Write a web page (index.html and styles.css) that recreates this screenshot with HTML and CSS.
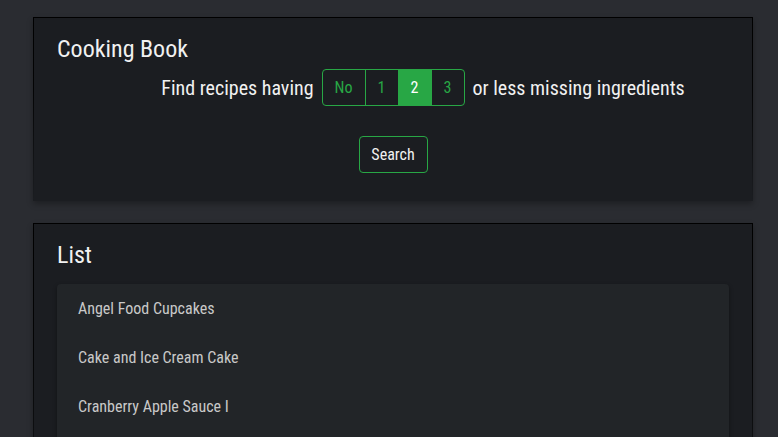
FILE: index.html
```html
<!DOCTYPE html>
<html>
<head>
<meta charset="utf-8">
<link rel="stylesheet" href="styles.css">
</head>
<body>
<div class="page">
  <section class="card">
    <h1 class="title">Cooking Book</h1>
    <div class="filter">
      <span class="label">Find recipes having</span>
      <div class="group">
        <span class="seg seg-no">No</span>
        <span class="seg">1</span>
        <span class="seg active">2</span>
        <span class="seg">3</span>
      </div>
      <span class="label">or less missing ingredients</span>
    </div>
    <div class="actions">
      <button class="search">Search</button>
    </div>
  </section>
  <section class="card list-card">
    <h2 class="title">List</h2>
    <ul class="list">
      <li>Angel Food Cupcakes</li>
      <li>Cake and Ice Cream Cake</li>
      <li>Cranberry Apple Sauce I</li>
    </ul>
  </section>
</div>
</body>
</html>
```
FILE: styles.css
```css
html, body {
  margin: 0;
  padding: 0;
  background: #2a2c31;
  height: 100%;
  overflow: hidden;
}
body {
  font-family: Roboto, "Noto Sans", sans-serif;
  font-stretch: condensed;
  color: #f1f1f1;
}
.page {
  padding: 17px 25px 0 33px;
  display: flex;
  flex-direction: column;
  gap: 22px;
}
.card {
  background: #1b1d21;
  border-style: solid;
  border-width: 1px 1px 0 1px;
  border-image: linear-gradient(to bottom, #000 0%, rgba(0,0,0,0.85) 40%, rgba(0,0,0,0) 100%) 1;
  box-shadow: 0 3px 6px rgba(0,0,0,0.3);
  padding: 17px 23px 28px;
}
.title {
  margin: 0;
  font-size: 24px;
  font-weight: 400;
  line-height: 28px;
}
.filter {
  display: flex;
  align-items: center;
  justify-content: center;
  padding-left: 60px;
  margin-top: 6px;
  gap: 8px;
}
.label {
  font-size: 20px;
}
.group {
  display: flex;
  border: 1px solid #28a745;
  border-radius: 4px;
  height: 35px;
  overflow: hidden;
}
.seg {
  width: 32px;
  display: flex;
  align-items: center;
  justify-content: center;
  color: #28a745;
  font-size: 16px;
  border-left: 1px solid #28a745;
}
.seg-no {
  border-left: none;
  width: 42px;
}
.seg.active {
  background: #28a745;
  color: #fff;
}
.actions {
  display: flex;
  justify-content: center;
  margin-top: 30px;
}
.search {
  background: transparent;
  border: 1px solid #28a745;
  border-radius: 4px;
  color: #f1f1f1;
  font-family: inherit;
  font-stretch: condensed;
  font-size: 16px;
  width: 69px;
  height: 37px;
  padding: 0;
}
.list-card {
  padding-bottom: 0;
  height: 300px;
}
.list {
  list-style: none;
  margin: 15px 0 0;
  padding: 0;
  min-height: 220px;
  background: #222528;
  border-radius: 4px;
  box-shadow: 0 2px 4px rgba(0,0,0,0.4);
}
.list li {
  height: 49px;
  line-height: 49px;
  padding-left: 21px;
  font-size: 16px;
  color: #c9c9c9;
}
```
